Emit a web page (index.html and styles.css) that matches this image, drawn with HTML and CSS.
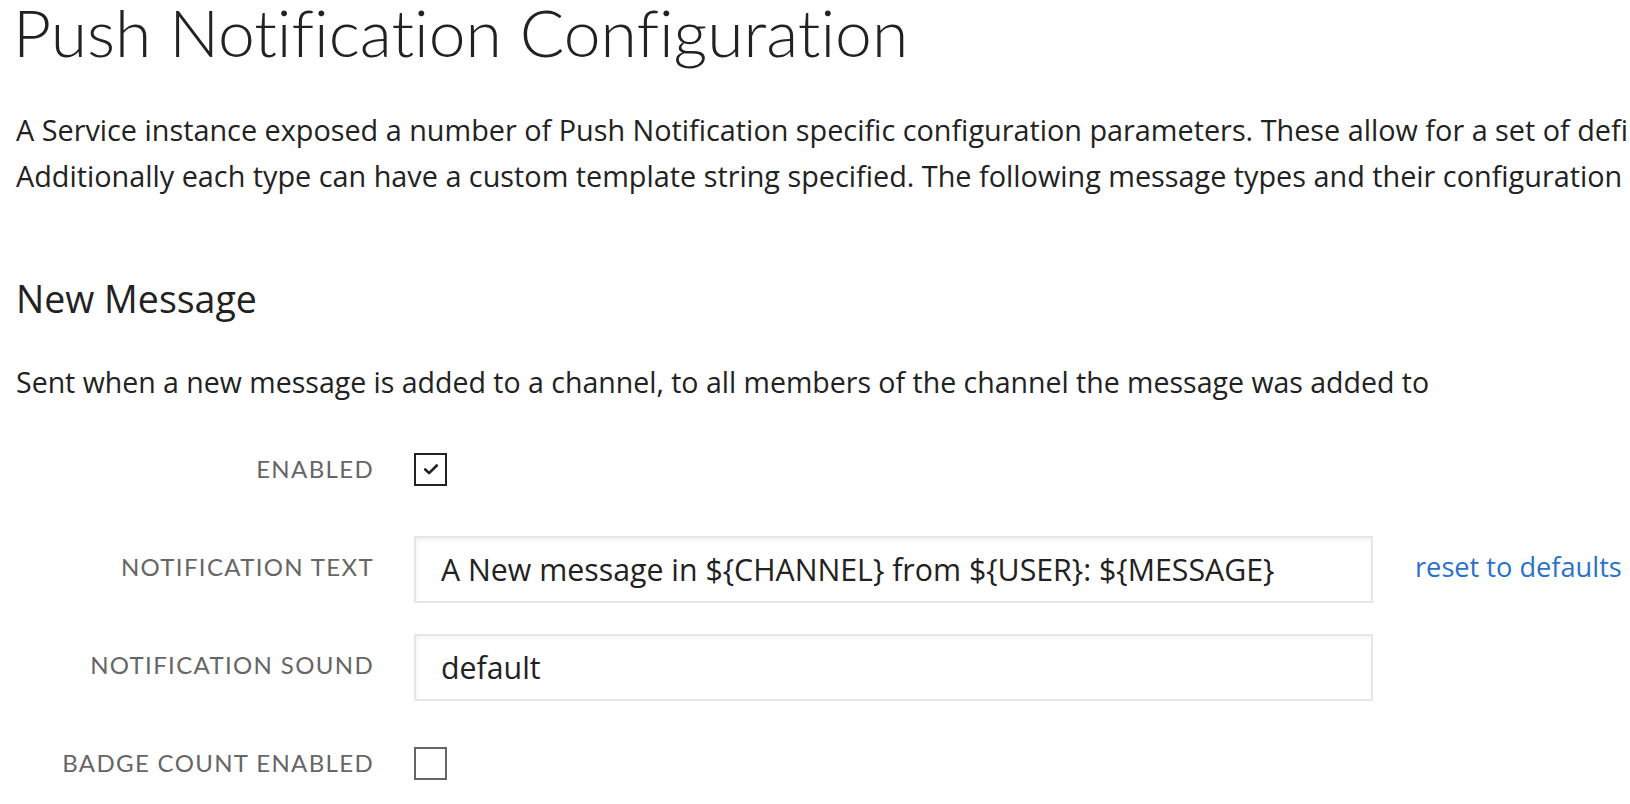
FILE: index.html
```html
<!DOCTYPE html>
<html lang="en">
<head>
<meta charset="utf-8">
<title>Push Notification Configuration</title>
<link rel="stylesheet" href="styles.css">
</head>
<body>
<main class="page">
  <h1 class="title">Push Notification Configuration</h1>
  <p class="intro">
    <span class="intro-line">A Service instance exposed a number of Push Notification specific configuration parameters. These allow for a set of defined message types to be enabled or disabled.</span>
    <span class="intro-line">Additionally each type can have a custom template string specified. The following message types and their configuration parameters are available.</span>
  </p>

  <section class="section">
    <h2 class="section-title">New Message</h2>
    <p class="section-desc">Sent when a new message is added to a channel, to all members of the channel the message was added to</p>

    <div class="fields">
      <div class="field">
        <span class="field-label">Enabled</span>
        <span class="checkbox checked">
          <svg viewBox="0 0 16 16" width="20" height="20"><path d="M3.4 8.4 L6.5 11.3 L12.6 5.2" fill="none" stroke="#222" stroke-width="2.1" stroke-linecap="round" stroke-linejoin="round"/></svg>
        </span>
      </div>
      <div class="field">
        <span class="field-label">Notification Text</span>
        <div class="input">A New message in ${CHANNEL} from ${USER}: ${MESSAGE}</div>
        <a class="reset-link" href="#">reset to defaults</a>
      </div>
      <div class="field">
        <span class="field-label">Notification Sound</span>
        <div class="input">default</div>
      </div>
      <div class="field">
        <span class="field-label">Badge Count Enabled</span>
        <span class="checkbox"></span>
      </div>
    </div>
  </section>
</main>
</body>
</html>
```

FILE: styles.css
```css
html, body {
  margin: 0;
  padding: 0;
  background: #ffffff;
}

body {
  font-family: "Open Sans", "Liberation Sans", sans-serif;
  color: #222222;
  overflow: hidden;
  font-variant-ligatures: none;
  font-feature-settings: "liga" 0, "dlig" 0;
}

.page {
  padding: 0 0 0 16px;
  white-space: nowrap;
}

.title {
  margin: 0 0 0 -3px;
  font-family: "Lato", "Open Sans", sans-serif;
  font-size: 66px;
  line-height: 64px;
  font-weight: 300;
  color: #222222;
}

.intro {
  margin: 43px 0 0 0;
  font-size: 28.8px;
  line-height: 46px;
  font-weight: 400;
}

.intro-line {
  display: block;
}

.section-title {
  margin: 78px 0 0 0;
  font-size: 37.5px;
  line-height: 44px;
  font-weight: 400;
}

.section-desc {
  margin: 38px 0 0 0;
  font-size: 28.5px;
  line-height: 46px;
}

.fields {
  margin-top: 15px;
  display: flex;
  flex-direction: column;
}

.field {
  display: flex;
  align-items: center;
  min-height: 98px;
}

.field-label {
  width: 358px;
  margin-right: 40px;
  text-align: right;
  text-transform: uppercase;
  font-family: "Lato", "Open Sans", sans-serif;
  font-size: 24px;
  line-height: 24px;
  letter-spacing: 1.35px;
  color: #666666;
}

.checkbox {
  box-sizing: border-box;
  width: 33px;
  height: 33px;
  border: 2px solid #666666;
  display: flex;
  align-items: center;
  justify-content: center;
}

.checkbox.checked {
  border-color: #222222;
}

.input {
  box-sizing: border-box;
  width: 959px;
  height: 67px;
  margin-top: 5px;
  padding: 0 25px;
  display: flex;
  align-items: center;
  border: 2px solid #e6e6e6;
  box-shadow: inset 1px 2px 4px rgba(0, 0, 0, 0.05);
  font-size: 30.3px;
  color: #222222;
}

.reset-link {
  margin-left: 42px;
  margin-top: -2px;
  font-size: 27.2px;
  color: #2a72c9;
  text-decoration: none;
}
```
